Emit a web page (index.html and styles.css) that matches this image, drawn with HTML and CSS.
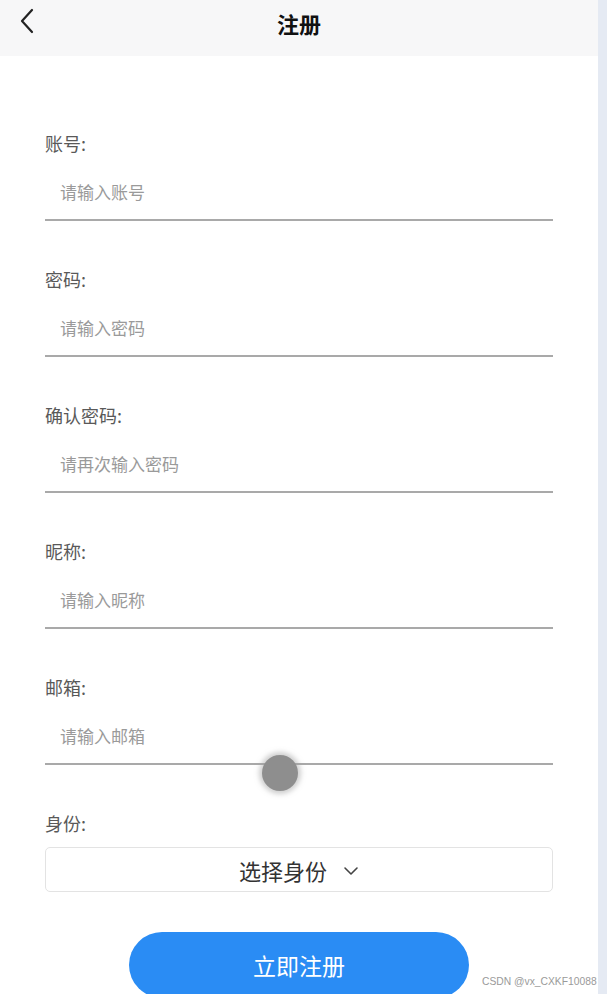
FILE: index.html
```html
<!DOCTYPE html>
<html lang="zh">
<head>
<meta charset="utf-8">
<title>注册</title>
<link rel="stylesheet" href="styles.css">
</head>
<body>
<div class="screen">
  <div class="page">
    <header class="topbar">
      <svg class="back" width="18" height="26" viewBox="0 0 18 26"><polyline points="14,2 4,13 14,24" fill="none" stroke="#222" stroke-width="2.2" stroke-linecap="round" stroke-linejoin="round"/></svg>
      <h1 class="title">注册</h1>
    </header>
    <form class="form">
      <div class="field">
        <label class="label">账号:</label>
        <input class="input" placeholder="请输入账号">
      </div>
      <div class="field">
        <label class="label">密码:</label>
        <input class="input" placeholder="请输入密码">
      </div>
      <div class="field">
        <label class="label">确认密码:</label>
        <input class="input" placeholder="请再次输入密码">
      </div>
      <div class="field">
        <label class="label">昵称:</label>
        <input class="input" placeholder="请输入昵称">
      </div>
      <div class="field">
        <label class="label">邮箱:</label>
        <input class="input" placeholder="请输入邮箱">
      </div>
      <div class="field field-select">
        <label class="label">身份:</label>
        <div class="select">
          <span>选择身份</span>
          <svg width="16" height="10" viewBox="0 0 16 10"><polyline points="2,2 8,8 14,2" fill="none" stroke="#444" stroke-width="1.6" stroke-linecap="round" stroke-linejoin="round"/></svg>
        </div>
      </div>
      <div class="actions">
        <button type="button" class="submit">立即注册</button>
      </div>
    </form>
    <div class="touch"></div>
  </div>
  <div class="rail"></div>
  <div class="watermark">CSDN @vx_CXKF10088</div>
</div>
</body>
</html>
```
FILE: styles.css
```css
* { box-sizing: border-box; }
html, body { margin: 0; padding: 0; }
body {
  font-family: "Noto Sans CJK SC", "Noto Sans", sans-serif;
  background: #fff;
  overflow: hidden;
}
.screen {
  display: flex;
  width: 607px;
  height: 994px;
  position: relative;
  overflow: hidden;
}
.page {
  width: 598px;
  position: relative;
  background: #fff;
}
.rail {
  flex: 1;
  background: #e5eaf3;
}
.topbar {
  height: 56px;
  background: #f7f7f8;
  position: relative;
  display: flex;
  align-items: center;
  justify-content: center;
}
.back {
  position: absolute;
  left: 18px;
  top: 8px;
}
.title {
  margin: 0 0 10px;
  font-size: 22px;
  font-weight: 700;
  color: #111;
}
.form {
  padding: 75px 45px 0 45px;
  display: flex;
  flex-direction: column;
}
.field {
  display: flex;
  flex-direction: column;
  margin-bottom: 46px;
}
.label {
  height: 24px;
  line-height: 24px;
  font-size: 18px;
  color: #595959;
}
.input {
  margin-top: 16px;
  height: 50px;
  border: 0;
  border-bottom: 2px solid #a9a9a9;
  padding: 0 0 8px 15px;
  font-family: inherit;
  font-size: 17px;
  color: #333;
  outline: none;
  background: transparent;
}
.input::placeholder { color: #9a9a9a; }
.field-select { margin-bottom: 40px; }
.select {
  margin-top: 12px;
  height: 45px;
  border: 1px solid #e3e3e3;
  border-radius: 5px;
  display: flex;
  align-items: center;
  justify-content: center;
  gap: 16px;
  font-size: 22px;
  color: #333;
}
.select svg { margin-top: 2px; }
.actions {
  display: flex;
  justify-content: center;
}
.submit {
  width: 340px;
  height: 66px;
  border: 0;
  border-radius: 33px;
  background: #2a8cf4;
  color: #fff;
  font-family: inherit;
  font-size: 23px;
  padding-bottom: 2px;
}
.touch {
  position: absolute;
  left: 262px;
  top: 755px;
  width: 36px;
  height: 36px;
  border-radius: 50%;
  background: #8e8e8e;
  box-shadow: 0 0 5px 3px rgba(160,160,160,0.5);
}
.watermark {
  position: absolute;
  left: 482px;
  top: 976px;
  white-space: nowrap;
  font-family: "Liberation Sans", sans-serif;
  font-size: 10.3px;
  color: #9a9a9a;
}
```
